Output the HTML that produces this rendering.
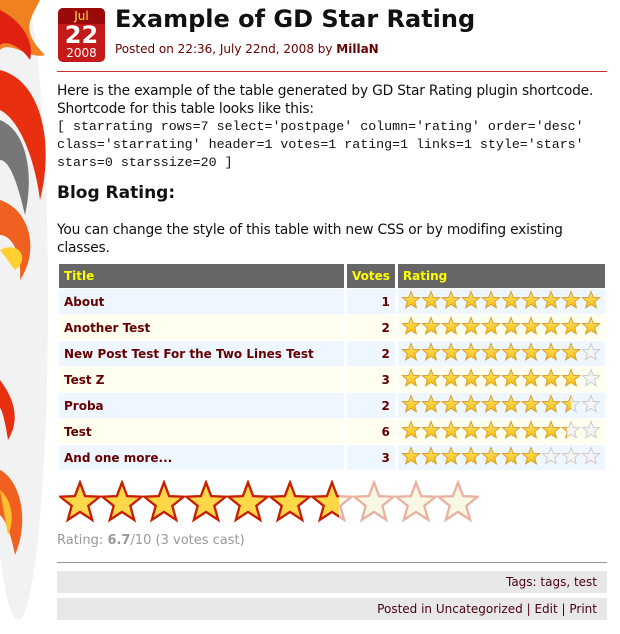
<!DOCTYPE html>
<html><head><meta charset="utf-8"><style>
body{margin:0;width:620px;height:634px;overflow:hidden;background:#fff;font-family:"DejaVu Sans","Liberation Sans",sans-serif;position:relative}
.a{position:absolute;white-space:nowrap}
.p{font-size:13.8px;color:#111;line-height:18px;letter-spacing:-0.2px}
.m{font-family:"Liberation Mono",monospace;font-size:13.3px;color:#111;line-height:18px}
table{position:absolute;left:56px;top:263px;border-collapse:separate;border-spacing:3px 1px;font-size:12px}
td,th{height:25px;padding:0 5px;text-align:left}
th{background:#666;color:#ff0;font-weight:bold;height:24px}
td{color:#600;font-weight:bold}
td.r{padding:0 0 0 3px}
tr.o td{background:#eef6ff}tr.e td{background:#fffff0}
.bar{position:absolute;left:57px;width:550px;height:22px;background:#e8e8e8;font-size:12px;color:#4a0010;text-align:right;line-height:22px;box-sizing:border-box;padding-right:10px}
</style></head><body>
<svg width="0" height="0" style="position:absolute">
<defs>
<linearGradient id="gf" x1="0" y1="0" x2="0" y2="1"><stop offset="0" stop-color="#ffe680"/><stop offset="1" stop-color="#f5c000"/></linearGradient>
<pattern id="pf" width="20" height="20" patternUnits="userSpaceOnUse"><path d="M10 1.5L12.23 7.43L18.56 7.72L13.61 11.67L15.29 17.78L10 14.3L4.71 17.78L6.39 11.67L1.44 7.72L7.77 7.43Z" fill="url(#gf)" stroke="#d9a030" stroke-width="1"/></pattern>
<pattern id="pe" width="20" height="20" patternUnits="userSpaceOnUse"><path d="M10 1.5L12.23 7.43L18.56 7.72L13.61 11.67L15.29 17.78L10 14.3L4.71 17.78L6.39 11.67L1.44 7.72L7.77 7.43Z" fill="#f4f4f4" stroke="#ccc" stroke-width="1"/></pattern>
<pattern id="bf" width="42" height="44" patternUnits="userSpaceOnUse"><path transform="translate(-2,-1) scale(2.3)" d="M10 1.5L12.23 7.43L18.56 7.72L13.61 11.67L15.29 17.78L10 14.3L4.71 17.78L6.39 11.67L1.44 7.72L7.77 7.43Z" fill="#ffd84a" stroke="#c81e00" stroke-width="1"/></pattern>
<pattern id="be" width="42" height="44" patternUnits="userSpaceOnUse"><path transform="translate(-2,-1) scale(2.3)" d="M10 1.5L12.23 7.43L18.56 7.72L13.61 11.67L15.29 17.78L10 14.3L4.71 17.78L6.39 11.67L1.44 7.72L7.77 7.43Z" fill="#f8f8e4" stroke="#eab0a0" stroke-width="1"/></pattern>
</defs></svg>

<svg class="a" style="left:0;top:0" width="60" height="634">
<ellipse cx="18" cy="300" rx="30" ry="320" fill="#f2f2f2"/>
<path d="M0 0H40C30 20 20 30 45 55C30 60 10 40 0 50Z" fill="#f08020"/>
<path d="M0 10C20 20 35 40 30 60C20 45 5 40 0 45Z" fill="#e02010"/>
<path d="M0 70C40 80 55 140 40 200C35 160 20 120 0 110Z" fill="#e83010"/>
<path d="M0 120C25 130 35 170 25 215C18 185 10 160 0 160Z" fill="#777"/>
<path d="M0 200C30 210 40 250 20 280C22 250 10 235 0 235Z" fill="#f06020"/>
<path d="M0 250C20 240 30 260 15 270Z" fill="#ffd030"/>
<path d="M0 380C15 400 20 420 8 440C5 420 2 410 0 408Z" fill="#e83010"/>
<path d="M0 470C20 480 30 520 15 555C10 530 5 520 0 515Z" fill="#f06020"/>
<path d="M0 490C12 500 15 520 8 535Z" fill="#ffc030"/>
</svg>

<div class="a" style="left:58px;top:8px;width:47px;height:54px;border-radius:5px;background:#c41a1a;overflow:hidden;text-align:center;color:#fff">
<div style="background:#9a0a0a;height:16px;font-size:12px;line-height:16px;color:#ffe040">Jul</div>
<div style="font-size:24px;font-weight:bold;line-height:22px">22</div>
<div style="font-size:12px;line-height:14px">2008</div></div>
<div class="a" style="left:115px;top:5px;font-size:24px;font-weight:bold;color:#111">Example of GD Star Rating</div>
<div class="a" style="left:115px;top:42px;font-size:12px;color:#600">Posted on 22:36, July 22nd, 2008 by <b>MillaN</b></div>
<div class="a" style="left:57px;top:71px;width:550px;height:1px;background:#c33"></div>

<div class="a p" style="left:57px;top:82px">Here is the example of the table generated by GD Star Rating plugin shortcode.<br>Shortcode for this table looks like this:</div>
<div class="a m" style="left:57px;top:118px">[ starrating rows=7 select='postpage' column='rating' order='desc'<br>class='starrating' header=1 votes=1 rating=1 links=1 style='stars'<br>stars=0 starssize=20 ]</div>
<div class="a" style="left:57px;top:183px;font-size:17px;font-weight:bold;color:#111">Blog Rating:</div>
<div class="a p" style="left:57px;top:221px">You can change the style of this table with new CSS or by modifing existing<br>classes.</div>

<table>
<tr><th style="width:275px">Title</th><th style="width:35px">Votes</th><th style="width:197px">Rating</th></tr>
<tr class="o"><td>About</td><td style="text-align:right">1</td><td class="r"><svg width="200" height="20"><rect width="200" height="20" fill="url(#pe)"/><rect width="200" height="20" fill="url(#pf)"/></svg></td></tr>
<tr class="e"><td>Another Test</td><td style="text-align:right">2</td><td class="r"><svg width="200" height="20"><rect width="200" height="20" fill="url(#pe)"/><rect width="200" height="20" fill="url(#pf)"/></svg></td></tr>
<tr class="o"><td>New Post Test For the Two Lines Test</td><td style="text-align:right">2</td><td class="r"><svg width="200" height="20"><rect width="200" height="20" fill="url(#pe)"/><rect width="180" height="20" fill="url(#pf)"/></svg></td></tr>
<tr class="e"><td>Test Z</td><td style="text-align:right">3</td><td class="r"><svg width="200" height="20"><rect width="200" height="20" fill="url(#pe)"/><rect width="180" height="20" fill="url(#pf)"/></svg></td></tr>
<tr class="o"><td>Proba</td><td style="text-align:right">2</td><td class="r"><svg width="200" height="20"><rect width="200" height="20" fill="url(#pe)"/><rect width="170" height="20" fill="url(#pf)"/></svg></td></tr>
<tr class="e"><td>Test</td><td style="text-align:right">6</td><td class="r"><svg width="200" height="20"><rect width="200" height="20" fill="url(#pe)"/><rect width="166" height="20" fill="url(#pf)"/></svg></td></tr>
<tr class="o"><td>And one more...</td><td style="text-align:right">3</td><td class="r"><svg width="200" height="20"><rect width="200" height="20" fill="url(#pe)"/><rect width="140" height="20" fill="url(#pf)"/></svg></td></tr>
</table>

<svg class="a" style="left:59px;top:480px" width="420" height="46"><rect width="420" height="44" fill="url(#be)"/><rect width="280" height="44" fill="url(#bf)"/></svg>
<div class="a" style="left:57px;top:533px;font-size:13px;color:#999">Rating: <b>6.7</b>/10 (3 votes cast)</div>
<div class="a" style="left:57px;top:562px;width:550px;height:1px;background:#999"></div>
<div class="bar" style="top:571px">Tags: tags, test</div>
<div class="bar" style="top:598px">Posted in Uncategorized | Edit | Print</div>
</body></html>
